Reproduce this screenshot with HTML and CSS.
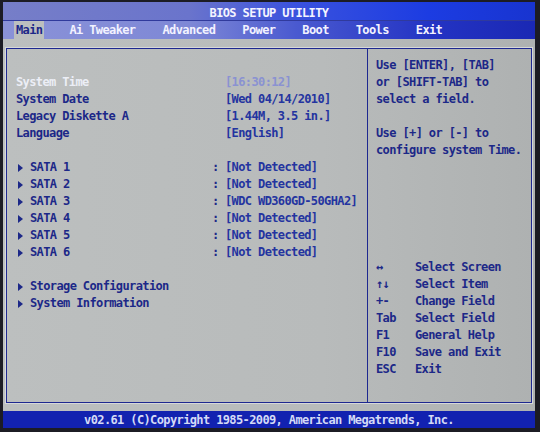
FILE: index.html
```html
<!DOCTYPE html>
<html lang="en">
<head>
	<meta charset="utf-8">
	<title>BIOS Setup Utility</title>
	<link rel="stylesheet" href="styles.css">
</head>
<body>
	<div class="screen">
		<div class="titlebar">BIOS SETUP UTILITY</div>
		<div class="menubar">
			<span class="tab selected">Main</span>
			<span class="tab">Ai Tweaker</span>
			<span class="tab">Advanced</span>
			<span class="tab">Power</span>
			<span class="tab">Boot</span>
			<span class="tab">Tools</span>
			<span class="tab">Exit</span>
		</div>

		<div class="frame">
			<div class="items">
				<div class="row active"><span class="label">System Time</span><span></span><span class="value">[16:30:12]</span></div>
				<div class="row"><span class="label">System Date</span><span></span><span class="value">[Wed 04/14/2010]</span></div>
				<div class="row"><span class="label">Legacy Diskette A</span><span></span><span class="value">[1.44M, 3.5 in.]</span></div>
				<div class="row"><span class="label">Language</span><span></span><span class="value">[English]</span></div>
				<div class="blank"></div>
				<div class="row"><span class="label sub">SATA 1</span><span>:</span><span class="value">[Not Detected]</span></div>
				<div class="row"><span class="label sub">SATA 2</span><span>:</span><span class="value">[Not Detected]</span></div>
				<div class="row"><span class="label sub">SATA 3</span><span>:</span><span class="value">[WDC WD360GD-50GHA2]</span></div>
				<div class="row"><span class="label sub">SATA 4</span><span>:</span><span class="value">[Not Detected]</span></div>
				<div class="row"><span class="label sub">SATA 5</span><span>:</span><span class="value">[Not Detected]</span></div>
				<div class="row"><span class="label sub">SATA 6</span><span>:</span><span class="value">[Not Detected]</span></div>
				<div class="blank"></div>
				<div class="row"><span class="label sub">Storage Configuration</span></div>
				<div class="row"><span class="label sub">System Information</span></div>
			</div>

			<div class="help">
				<p>Use [ENTER], [TAB]<br>or [SHIFT-TAB] to<br>select a field.</p>
				<p>Use [+] or [-] to<br>configure system Time.</p>

				<dl class="keys">
					<dt>&#8596;</dt><dd>Select Screen</dd>
					<dt>&#8593;&#8595;</dt><dd>Select Item</dd>
					<dt>+-</dt><dd>Change Field</dd>
					<dt>Tab</dt><dd>Select Field</dd>
					<dt>F1</dt><dd>General Help</dd>
					<dt>F10</dt><dd>Save and Exit</dd>
					<dt>ESC</dt><dd>Exit</dd>
				</dl>
			</div>
		</div>

		<div class="footer">v02.61 (C)Copyright 1985-2009, American Megatrends, Inc.</div>
	</div>
</body>
</html>
```

FILE: styles.css
```css
html, body {
  margin: 0;
  padding: 0;
  background: #1c1c24;
  overflow: hidden;
}

.screen {
  width: 532px;
  height: 426px;
  margin: 2px 0 0 3px;
  display: flex;
  flex-direction: column;
  background: linear-gradient(90deg, #bcbfbf 0%, #b8bbbb 60%, #aeb1b1 100%);
  font-family: "DejaVu Sans Mono", "Liberation Mono", monospace;
  font-weight: bold;
  font-size: 12px;
  letter-spacing: -0.62px;
  line-height: 17px;
  color: #1c2888;
}

.titlebar {
  height: 18px;
  line-height: 22px;
  text-align: center;
  color: #f4f4ff;
  background: linear-gradient(90deg, #767ec8 0%, #6a74cc 35%, #3a52de 55%, #1c3ce2 80%, #1834d0 100%);
}

.menubar {
  height: 18px;
  display: flex;
  gap: 23px;
  padding-left: 11px;
  border-top: 1px solid #303a9c;
  color: #f2f2ff;
  background: linear-gradient(90deg, #8a92d8 0%, #7e88d6 35%, #4a5ad0 55%, #2434c4 80%, #1a28b4 100%);
}

.tab {
  padding: 0 2px;
  line-height: 19px;
}

.tab.selected {
  color: #1c2888;
  background: #bcbfbf;
}

.frame {
  flex: 1;
  display: flex;
  margin: 9px 3px 8px 3px;
  border: 1px solid #1e2890;
  box-shadow: 0 0 0 1px #d6d8d8;
}

.items {
  width: 351px;
  padding: 25px 0 0 9px;
  border-right: 1px solid #1e2890;
}

.row {
  display: grid;
  grid-template-columns: 196px 13px auto;
  height: 17px;
  white-space: nowrap;
}

.blank {
  height: 17px;
}

.value {
  color: #2434a0;
}

.active .label {
  color: #eceef6;
}

.active .value {
  color: #8a92d2;
}

.sub::before {
  content: "";
  display: inline-block;
  margin: 0 7px 0 2px;
  border-left: 5px solid #1c2888;
  border-top: 4px solid transparent;
  border-bottom: 4px solid transparent;
  vertical-align: -1px;
}

.help {
  flex: 1;
  padding: 8px 0 0 8px;
  white-space: nowrap;
}

.help p {
  margin: 0 0 17px 0;
}

.keys {
  display: grid;
  grid-template-columns: 39px auto;
  margin: 100px 0 0 0;
}

.keys dt, .keys dd {
  margin: 0;
}

.footer {
  height: 17px;
  line-height: 18px;
  text-align: center;
  color: #d4daf6;
  background: #1222b0;
}
```
